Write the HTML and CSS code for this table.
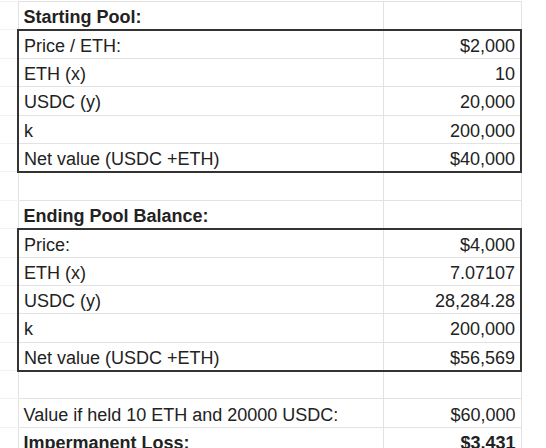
FILE: index.html
```html
<!DOCTYPE html>
<html>
<head>
<meta charset="utf-8">
<link rel="stylesheet" href="styles.css">
</head>
<body>
<table class="sheet">
  <colgroup>
    <col class="c-gap">
    <col class="c-label">
    <col class="c-value">
  </colgroup>
  <tr>
    <td class="gap"></td>
    <td class="lbl bold">Starting Pool:</td>
    <td class="val"></td>
  </tr>
  <tr class="box-top">
    <td class="gap"></td>
    <td class="lbl box-l">Price / ETH:</td>
    <td class="val box-r">$2,000</td>
  </tr>
  <tr>
    <td class="gap"></td>
    <td class="lbl box-l">ETH (x)</td>
    <td class="val box-r">10</td>
  </tr>
  <tr>
    <td class="gap"></td>
    <td class="lbl box-l">USDC (y)</td>
    <td class="val box-r">20,000</td>
  </tr>
  <tr>
    <td class="gap"></td>
    <td class="lbl box-l">k</td>
    <td class="val box-r">200,000</td>
  </tr>
  <tr class="box-bottom">
    <td class="gap"></td>
    <td class="lbl box-l">Net value (USDC +ETH)</td>
    <td class="val box-r">$40,000</td>
  </tr>
  <tr>
    <td class="gap"></td>
    <td class="lbl"></td>
    <td class="val"></td>
  </tr>
  <tr>
    <td class="gap"></td>
    <td class="lbl bold">Ending Pool Balance:</td>
    <td class="val"></td>
  </tr>
  <tr class="box-top">
    <td class="gap"></td>
    <td class="lbl box-l">Price:</td>
    <td class="val box-r">$4,000</td>
  </tr>
  <tr>
    <td class="gap"></td>
    <td class="lbl box-l">ETH (x)</td>
    <td class="val box-r">7.07107</td>
  </tr>
  <tr>
    <td class="gap"></td>
    <td class="lbl box-l">USDC (y)</td>
    <td class="val box-r">28,284.28</td>
  </tr>
  <tr>
    <td class="gap"></td>
    <td class="lbl box-l">k</td>
    <td class="val box-r">200,000</td>
  </tr>
  <tr class="box-bottom">
    <td class="gap"></td>
    <td class="lbl box-l">Net value (USDC +ETH)</td>
    <td class="val box-r">$56,569</td>
  </tr>
  <tr>
    <td class="gap"></td>
    <td class="lbl"></td>
    <td class="val"></td>
  </tr>
  <tr>
    <td class="gap"></td>
    <td class="lbl">Value if held 10 ETH and 20000 USDC:</td>
    <td class="val">$60,000</td>
  </tr>
  <tr>
    <td class="gap"></td>
    <td class="lbl bold">Impermanent Loss:</td>
    <td class="val bold">$3,431</td>
  </tr>
</table>
</body>
</html>
```

FILE: styles.css
```css
html, body {
  margin: 0;
  padding: 0;
  background: #ffffff;
}

body {
  font-family: "Liberation Sans", Arial, sans-serif;
  font-size: 18px;
  color: #222222;
  overflow: hidden;
}

.sheet {
  border-collapse: collapse;
  table-layout: fixed;
  width: 521px;
  margin-top: 1px;
}

.c-gap { width: 18px; }
.c-label { width: 365px; }
.c-value { width: 138px; }

.sheet tr {
  height: 28.4px;
}

.sheet td {
  padding: 3px 5px 0 5px;
  white-space: nowrap;
  line-height: 20px;
  border: 1px solid #e2e2e2;
  vertical-align: middle;
}

.sheet td.gap {
  border-left: none;
  border-top: 1px solid #f3f3f3;
  border-bottom: 1px solid #f3f3f3;
  padding: 0;
}

.lbl {
  text-align: left;
}

.val {
  text-align: right;
  padding-right: 4px;
}

.bold {
  font-weight: bold;
}

.box-top td.lbl,
.box-top td.val {
  border-top: 2px solid #333333;
}

.box-bottom td.lbl,
.box-bottom td.val {
  border-bottom: 2px solid #333333;
}

.sheet td.box-l {
  border-left: 2px solid #333333;
}

.sheet td.box-r {
  border-right: 2px solid #333333;
}
```
